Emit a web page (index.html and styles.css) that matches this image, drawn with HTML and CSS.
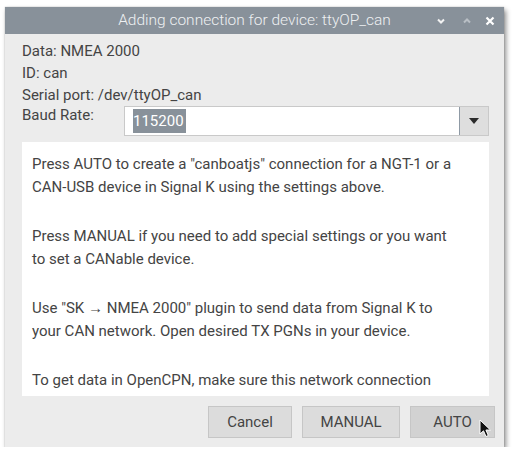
FILE: index.html
```html
<!DOCTYPE html>
<html>
<head>
<meta charset="utf-8">
<link rel="stylesheet" href="styles.css">
</head>
<body>
<div class="window">
  <div class="titlebar">
    <div class="title">Adding connection for device: ttyOP_can</div>
    <div class="controls">
      <svg class="ctl" width="10" height="8" viewBox="0 0 10 8"><path d="M2 2.5 L5 5.5 L8 2.5" fill="none" stroke="#f2f2f2" stroke-width="2"/></svg>
      <svg class="ctl dim" width="10" height="8" viewBox="0 0 10 8"><path d="M2 5.5 L5 2.5 L8 5.5" fill="none" stroke="#b9bfc5" stroke-width="2"/></svg>
      <svg class="ctl close" width="10" height="10" viewBox="0 0 10 10"><path d="M1.5 1.5 L8.5 8.5 M8.5 1.5 L1.5 8.5" fill="none" stroke="#ffffff" stroke-width="2.2"/></svg>
    </div>
  </div>
  <div class="body">
    <div class="info">
      <div class="line">Data: NMEA 2000</div>
      <div class="line">ID: can</div>
      <div class="line">Serial port: /dev/ttyOP_can</div>
    </div>
    <div class="baud">
      <div class="label">Baud Rate:</div>
      <div class="combo">
        <div class="combo-field"><span class="sel">115200</span></div>
        <div class="combo-btn"><svg width="10" height="6" viewBox="0 0 10 6"><path d="M0 0 H10 L5 6 Z" fill="#2b2b2b"/></svg></div>
      </div>
    </div>
    <div class="textbox">
      <p>Press AUTO to create a "canboatjs" connection for a NGT-1 or a<br>CAN-USB device in Signal K using the settings above.</p>
      <p>Press MANUAL if you need to add special settings or you want<br>to set a CANable device.</p>
      <p>Use "SK → NMEA 2000" plugin to send data from Signal K to<br>your CAN network. Open desired TX PGNs in your device.</p>
      <p>To get data in OpenCPN, make sure this network connection<br>exists in OpenCPN.</p>
    </div>
    <div class="buttons">
      <div class="btn cancel">Cancel</div>
      <div class="btn manual">MANUAL</div>
      <div class="btn auto hover">AUTO</div>
    </div>
  </div>
  <svg class="cursor" width="13" height="19" viewBox="0 0 13 19"><path d="M1 1 L1 15 L4.5 11.8 L7 17.5 L9.3 16.5 L6.9 11 L11.5 11 Z" fill="#111" stroke="#fff" stroke-width="1"/></svg>
</div>
</body>
</html>
```
FILE: styles.css
```css
html, body {
  margin: 0;
  padding: 0;
  background: #ffffff;
}
body {
  font-family: Roboto, "Liberation Sans", sans-serif;
  color: #444444;
}
.window {
  position: relative;
  margin: 7px 0 0 5px;
  width: 499px;
  height: 440px;
  background: #ececec;
  box-shadow: 2px 3px 5px rgba(0,0,0,0.45), 0 0 1px rgba(0,0,0,0.3);
  display: flex;
  flex-direction: column;
}
.titlebar {
  height: 27px;
  background: #88919a;
  display: flex;
  align-items: center;
}
.title {
  flex: 1;
  text-align: center;
  color: #eef0f2;
  font-size: 15.5px;
  font-weight: 300;
  padding-left: 68px;
  line-height: 27px;
}
.controls {
  display: flex;
  align-items: center;
  padding-right: 9px;
}
.ctl { display: block; }
.dim { margin-left: 16px; }
.close { margin-left: 13px; }
.body {
  flex: 1;
  display: flex;
  flex-direction: column;
  padding: 6px 15px 0 17px;
}
.info .line {
  font-size: 15px;
  line-height: 22px;
  height: 22px;
}
.baud {
  display: flex;
  align-items: flex-start;
  margin-top: 0;
}
.label {
  width: 102px;
  font-size: 15px;
  line-height: 19px;
}
.combo {
  flex: 1;
  height: 30px;
  box-sizing: border-box;
  border: 1px solid #c9c9c9;
  display: flex;
  background: #ffffff;
}
.combo-field {
  flex: 1;
  display: flex;
  align-items: center;
  padding-left: 8px;
  font-size: 15px;
}
.sel {
  background: #88919a;
  color: #ffffff;
  line-height: 24px;
  padding-right: 2px;
}
.combo-btn {
  width: 28px;
  border-left: 1px solid #8f9aa5;
  background: #dedede;
  display: flex;
  align-items: center;
  justify-content: center;
}
.textbox {
  margin-top: 6px;
  height: 254px;
  background: #ffffff;
  overflow: hidden;
  padding: 11px 10px 0 10px;
  box-sizing: border-box;
  font-size: 15px;
  line-height: 23px;
  white-space: nowrap;
}
.textbox p {
  margin: 0 0 26px 0;
}
.buttons {
  display: flex;
  justify-content: flex-end;
  gap: 10px;
  margin-top: 10px;
  margin-right: -6px;
}
.btn {
  height: 32px;
  box-sizing: border-box;
  border: 1px solid #c6c6c6;
  background: #dcdcdc;
  display: flex;
  align-items: center;
  justify-content: center;
  font-size: 15px;
  color: #444444;
}
.cancel { width: 84px; }
.manual { width: 98px; }
.auto { width: 85px; }
.hover { background: #d2d2d2; }
.cursor {
  position: absolute;
  left: 474px;
  top: 412px;
}
```
